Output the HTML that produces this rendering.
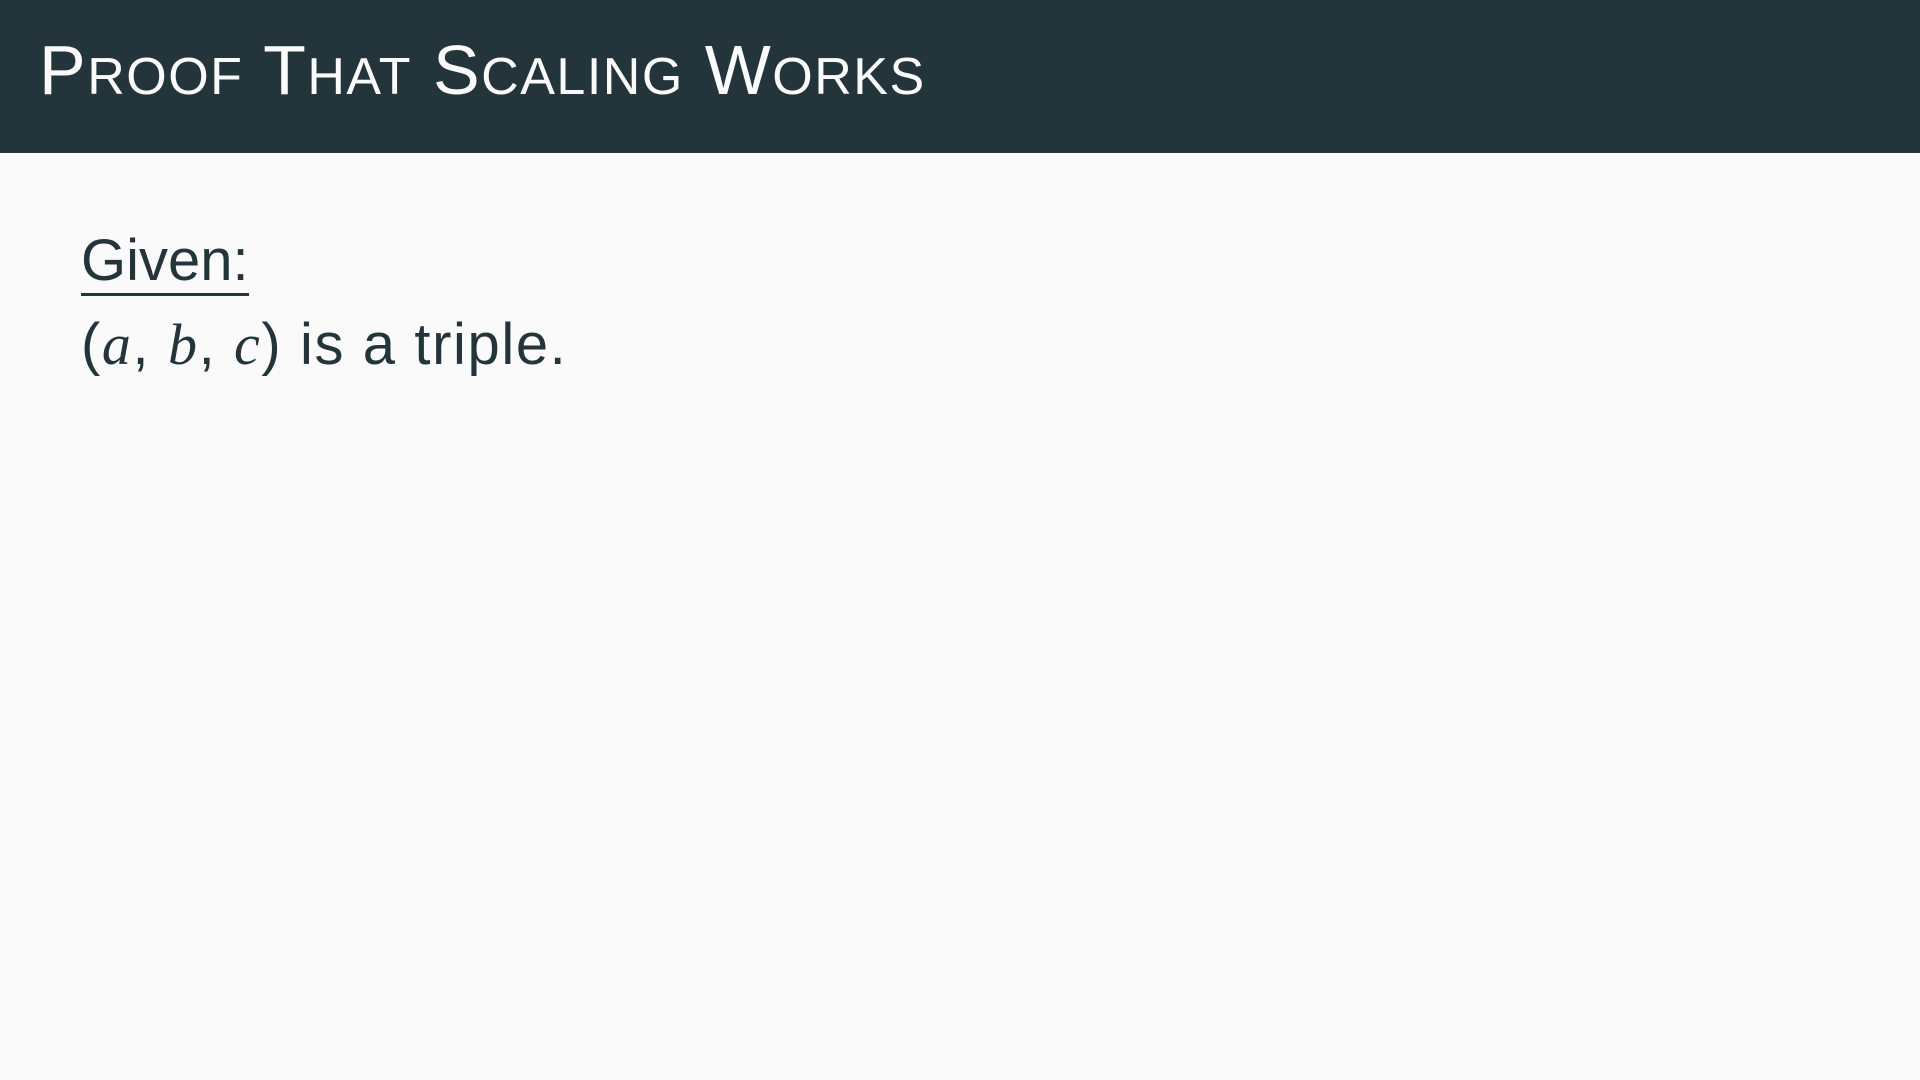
<!DOCTYPE html>
<html><head><meta charset="utf-8"><style>
html,body{margin:0;padding:0;width:1920px;height:1080px;background:#fafafa;overflow:hidden;font-family:"Liberation Sans",sans-serif;}
.hdr{position:absolute;left:0;top:0;width:1920px;height:153px;background:#23353b;}
.title{position:absolute;left:39px;top:25px;color:#fafafa;font-size:70px;line-height:90px;white-space:nowrap;letter-spacing:1.5px;}
.title .s{font-size:52px;}
.given{position:absolute;left:81px;top:226px;font-size:58px;color:#23353b;line-height:70px;}
.given span{border-bottom:3px solid #23353b;}
.line{position:absolute;left:81px;top:310px;font-size:58px;color:#23353b;line-height:70px;white-space:nowrap;letter-spacing:1.6px;}
i{font-family:"Liberation Serif",serif;}
</style></head><body>
<div class="hdr"></div>
<div class="title">P<span class="s">ROOF</span> T<span class="s">HAT</span> S<span class="s">CALING</span> W<span class="s">ORKS</span></div>
<div class="given"><span>Given:</span></div>
<div class="line">(<i>a</i>, <i>b</i>, <i>c</i>) is a triple.</div>
</body></html>
